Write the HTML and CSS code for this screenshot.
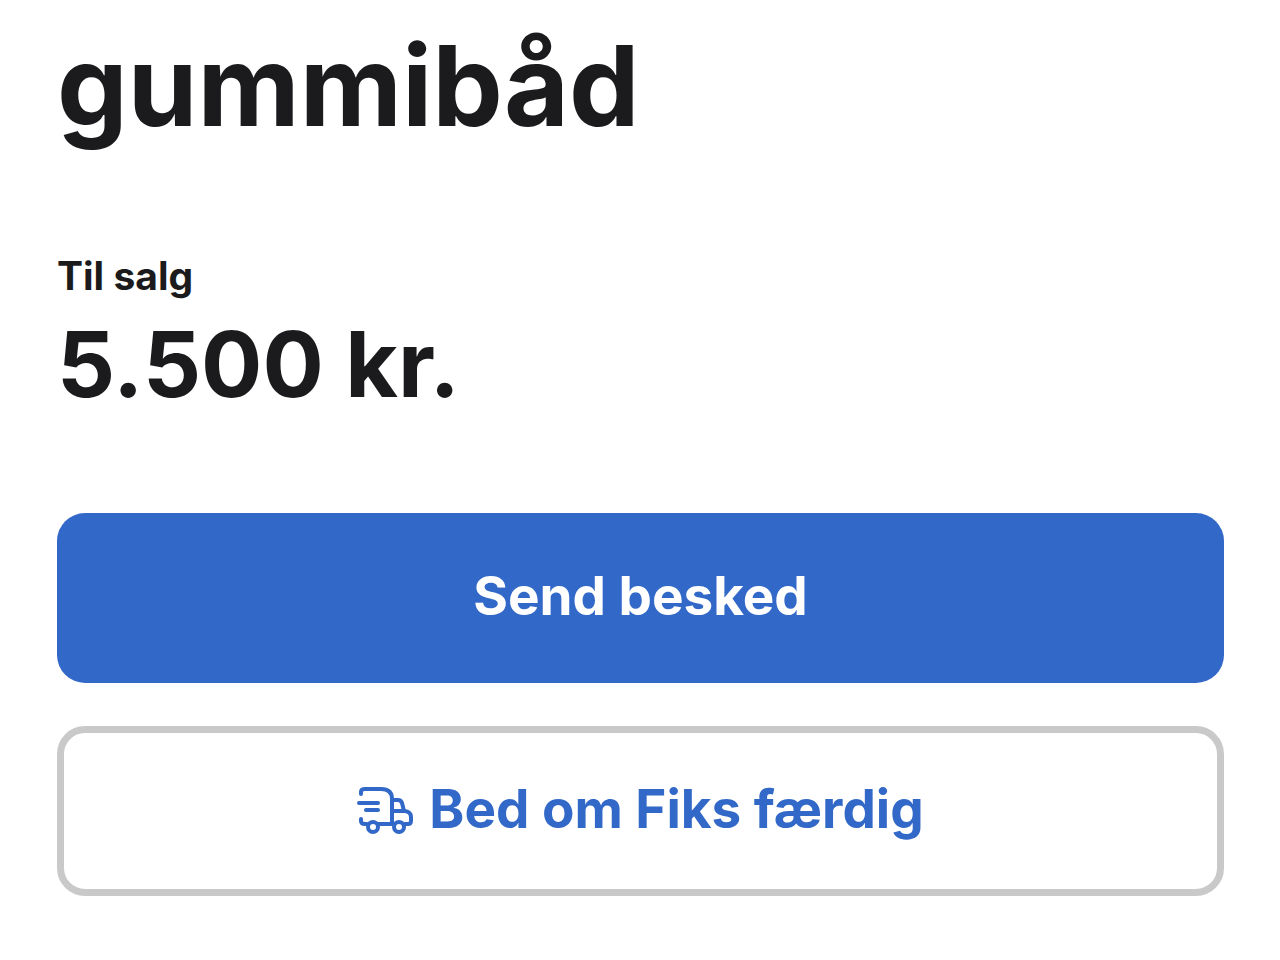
FILE: index.html
```html
<!DOCTYPE html>
<html lang="da">
<head>
<meta charset="utf-8">
<meta name="viewport" content="width=device-width, initial-scale=1">
<title>gummibåd</title>
<link rel="stylesheet" href="styles.css">
</head>
<body>
<main class="listing">
  <h1 class="title">gummibåd</h1>
  <section class="offer">
    <p class="label">Til salg</p>
    <p class="price">5.500 kr.</p>
  </section>
  <div class="actions">
    <button class="button primary" type="button">Send besked</button>
    <button class="button secondary" type="button">
      <svg class="truck" viewBox="0 0 56 50" aria-hidden="true">
        <path d="M4 10V8Q4 5 8 5H24Q35 5 35 15V40H21M4 35V37Q4 40 8 40H10M2 19H21M9 26H21M36 16H41Q44 16 45 19L47 27M36 27H48Q54 28 54 33V37Q54 40 51 40H48"/>
        <circle cx="16" cy="43" r="5"/><circle cx="42" cy="43" r="5"/>
      </svg>
      <span>Bed om Fiks færdig</span>
    </button>
  </div>
</main>
</body>
</html>
```
FILE: styles.css
```css
* { box-sizing: border-box; }
body {
  margin: 0;
  background: #fff;
  color: #1b1b1d;
  font-family: Inter, "Noto Sans", sans-serif;
  font-weight: 700;
}
.listing { padding: 13px 56px 64px 57px; }
.title { margin: 0; font-size: 112px; line-height: 144px; }
.offer { padding-top: 95px; }
.label, .price { margin: 0; }
.label { font-size: 39px; line-height: 48px; }
.price { font-size: 91px; line-height: 128px; }
.actions { display: grid; gap: 43px; padding-top: 85px; }
.button {
  display: flex;
  align-items: center;
  justify-content: center;
  gap: 16px;
  min-height: 170px;
  padding: 16px 16px 20px;
  border: 0;
  border-radius: 28px;
  font: inherit;
  font-size: 53px;
  line-height: 64px;
}
.primary { background: #3268c7; color: #fff; }
.secondary { border: 7px solid #c9c9ca; background: #fff; color: #3268c7; }
.truck {
  flex: none;
  width: 56px;
  height: 50px;
  fill: none;
  stroke: currentColor;
  stroke-width: 4;
  stroke-linecap: round;
  stroke-linejoin: round;
}
```
